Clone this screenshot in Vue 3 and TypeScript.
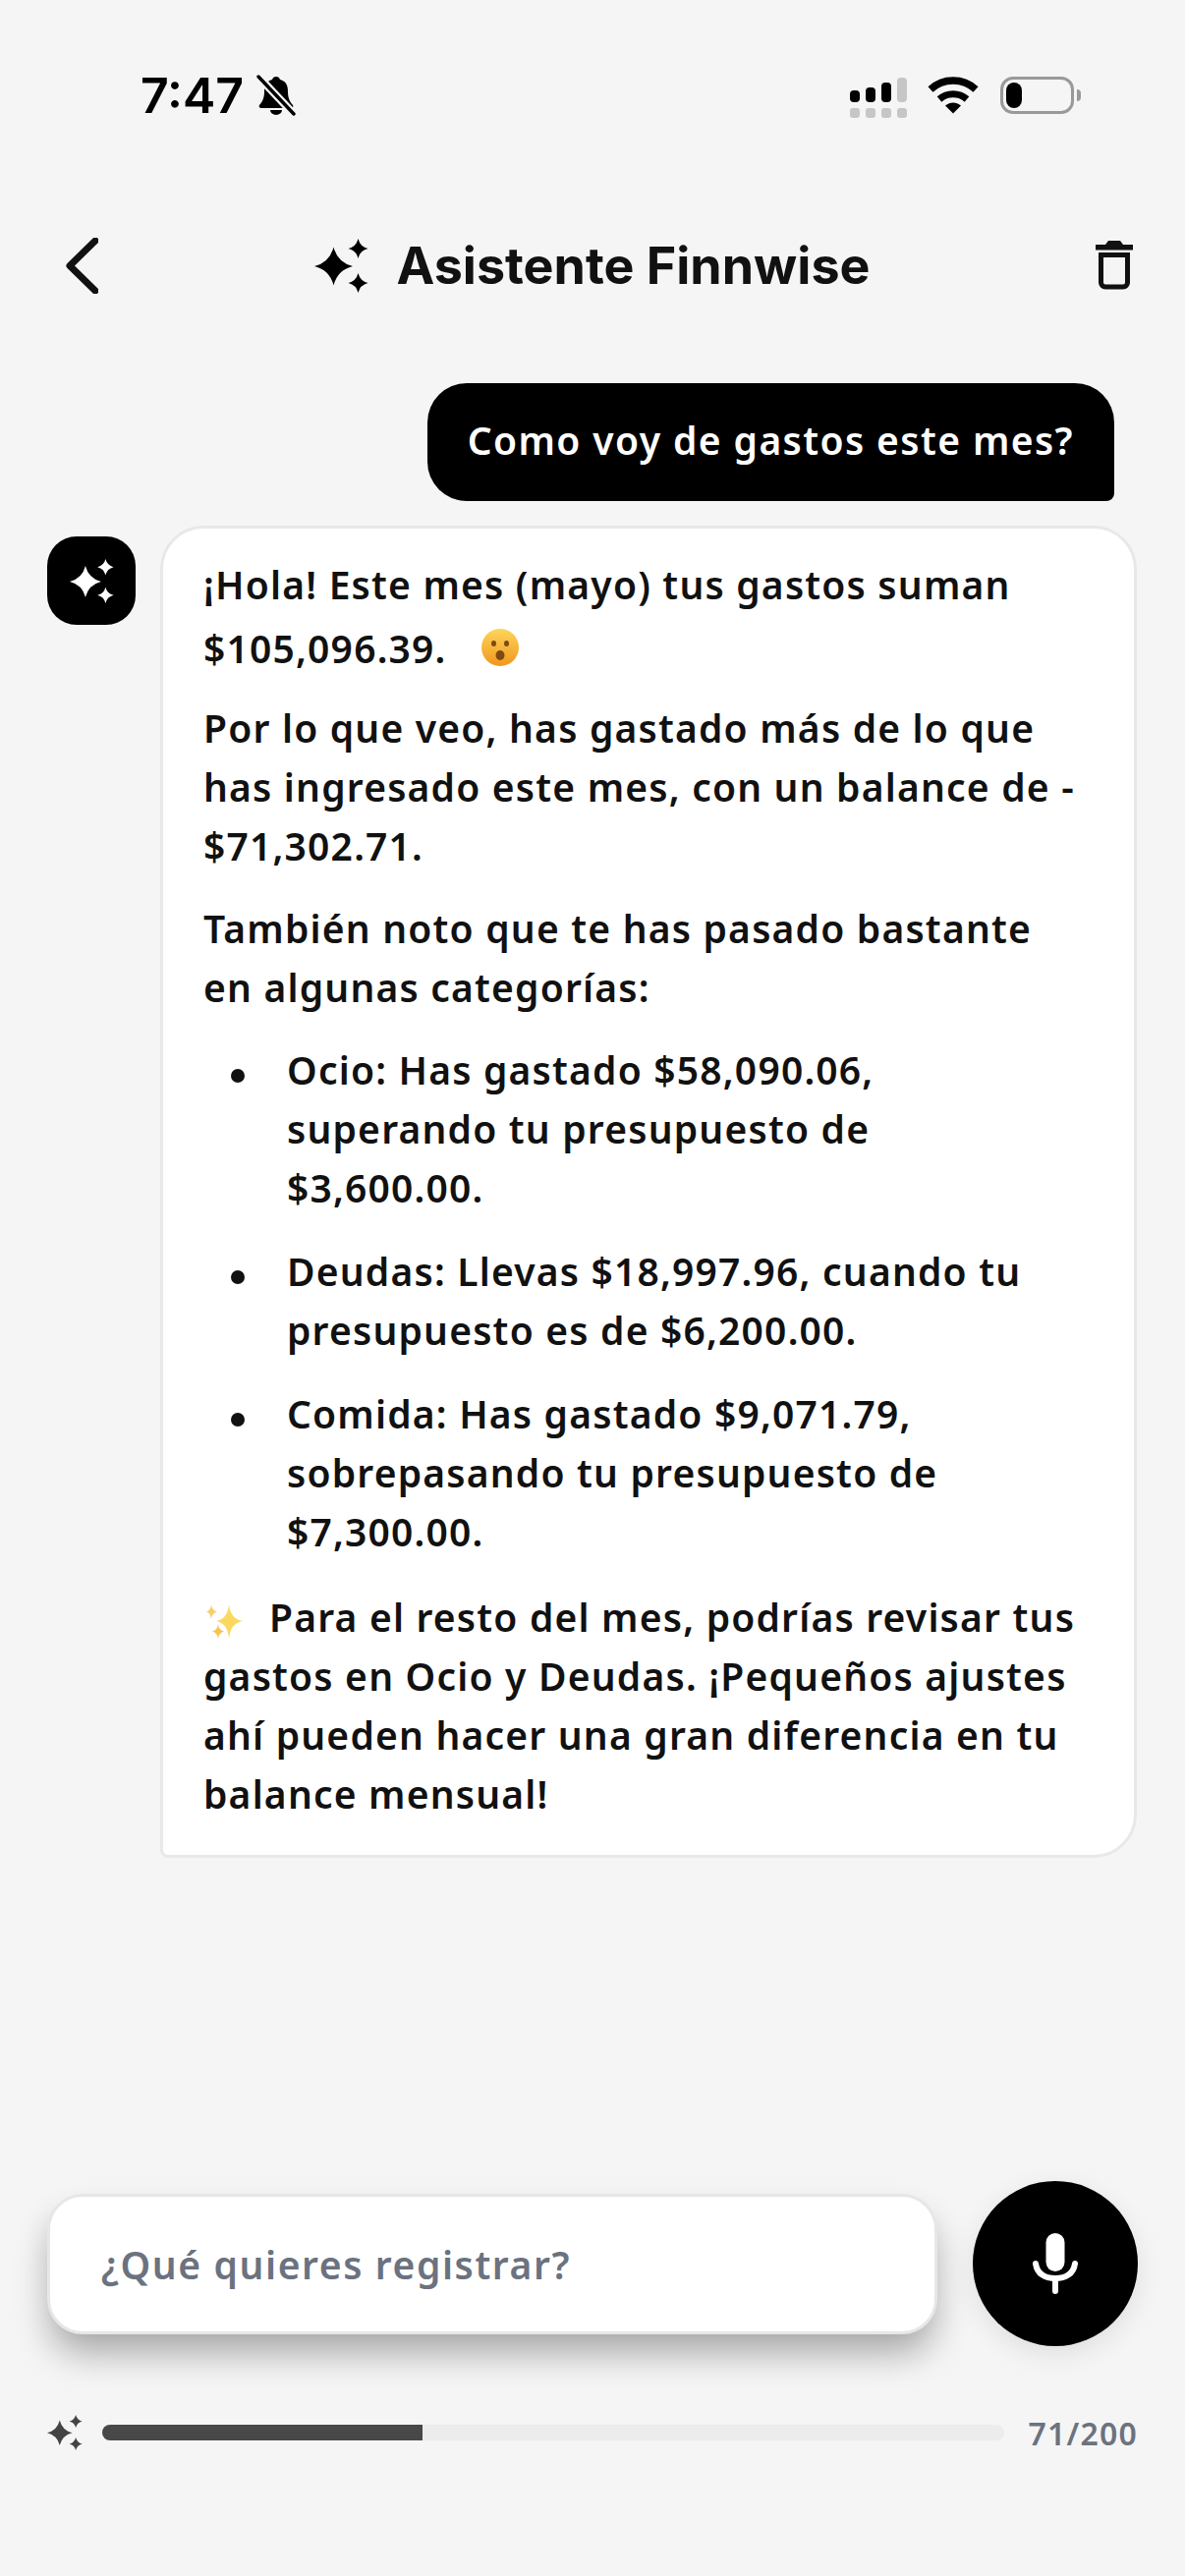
<script setup lang="ts">
interface Budget { lines: string[] }

function star(cx: number, cy: number, r: number): string {
  const k = r * 0.2
  return `M${cx} ${cy - r}Q${cx + k} ${cy - k} ${cx + r} ${cy}Q${cx + k} ${cy + k} ${cx} ${cy + r}Q${cx - k} ${cy + k} ${cx - r} ${cy}Q${cx - k} ${cy - k} ${cx} ${cy - r}Z`
}

const sparkles = star(19.5, 28, 19.5) + star(44.5, 10, 10) + star(44.5, 45, 10)
const usagePct = 35.5

const budgets: Budget[] = [
  { lines: ['Ocio: Has gastado $58,090.06,', 'superando tu presupuesto de', '$3,600.00.'] },
  { lines: ['Deudas: Llevas $18,997.96, cuando tu', 'presupuesto es de $6,200.00.'] },
  { lines: ['Comida: Has gastado $9,071.79,', 'sobrepasando tu presupuesto de', '$7,300.00.'] },
]

const signal = [
  { h: 12, on: true },
  { h: 15, on: true },
  { h: 20, on: true },
  { h: 25, on: false },
]
</script>

<template>
  <div class="screen">
    <div class="status">
      <div class="status-left">
        <span class="time">7:47</span>
        <svg class="bell" viewBox="0 0 40 42" width="40" height="42">
          <path d="M20 2c-2 0-3.400 1.300-4 3C10 6.500 8 11 8 17c0 6-1.500 10-5 14-1 1.500 0 3 2 3h30c2 0 3-1.500 2-3-3.500-4-5-8-5-14 0-6-2-10.500-8-12-.6-1.700-2-3-4-3z" fill="#000"/>
          <path d="M14 36a6 5 0 0 0 12 0z" fill="#000"/>
          <path d="M3 3l34 36" stroke="#f5f5f5" stroke-width="8"/>
          <path d="M2 2l36 38" stroke="#000" stroke-width="3.400" stroke-linecap="round"/>
        </svg>
      </div>
      <div class="status-right">
        <div class="signal">
          <div v-for="(b, i) in signal" :key="i" class="sig-col">
            <span class="sig-bar" :class="{ off: !b.on }" :style="{ height: b.h + 'px' }"></span>
            <span class="sig-dot"></span>
          </div>
        </div>
        <svg class="wifi" viewBox="0 0 52 38" width="52" height="38">
          <path d="M3 13C16 1 36 1 49 13" fill="none" stroke="#000" stroke-width="7.500"/>
          <path d="M12 23c8-7 20-7 28 0" fill="none" stroke="#000" stroke-width="7"/>
          <path d="M18 29.500c5-4 11-4 16 0L26 37.500z" fill="#000"/>
        </svg>
        <div class="battery">
          <span class="cell"></span>
        </div>
        <span class="nub"></span>
      </div>
    </div>

    <header class="head">
      <svg class="back" viewBox="0 0 33 57" width="33" height="57">
        <path d="M30 3L4 28.500 30 54" fill="none" stroke="#111" stroke-width="7" stroke-linecap="round" stroke-linejoin="round"/>
      </svg>
      <div class="title">
        <svg viewBox="0 0 55 55" width="55" height="55"><path :d="sparkles" fill="#000"/></svg>
        <h1>Asistente Finnwise</h1>
      </div>
      <svg class="trash" viewBox="0 0 38 50" width="38" height="50">
        <path d="M10 4l3-4h12l3 4h10v5.500H0V4z" fill="#111"/>
        <path d="M5.500 14.500v28a4.500 4.500 0 0 0 4.500 4.500h18a4.500 4.500 0 0 0 4.500-4.500v-28z" fill="none" stroke="#111" stroke-width="5"/>
      </svg>
    </header>

    <main class="thread">
      <div class="user-msg">Como voy de gastos este mes?</div>

      <div class="bot-row">
        <div class="avatar">
          <svg viewBox="0 0 55 55" width="45" height="45"><path :d="sparkles" fill="#fff"/></svg>
        </div>
        <div class="bot-msg">
          <p class="first">¡Hola! Este mes (mayo) tus gastos suman<br>$105,096.39.
            <svg class="emoji" viewBox="0 0 38 38" width="38" height="38">
              <defs>
                <linearGradient id="face" x1="0" y1="0" x2="0" y2="1">
                  <stop offset="0" stop-color="#fcd65a"/>
                  <stop offset="1" stop-color="#f0971e"/>
                </linearGradient>
              </defs>
              <circle cx="19" cy="19" r="19" fill="url(#face)"/>
              <ellipse cx="12.500" cy="15" rx="2.500" ry="3" fill="#7c4a12"/>
              <ellipse cx="25.500" cy="15" rx="2.500" ry="3" fill="#7c4a12"/>
              <ellipse cx="19" cy="27" rx="4.500" ry="5" fill="#7c4a12"/>
            </svg>
          </p>
          <p>Por lo que veo, has gastado más de lo que<br>has ingresado este mes, con un balance de -<br>$71,302.71.</p>
          <p>También noto que te has pasado bastante<br>en algunas categorías:</p>
          <ul>
            <li v-for="b in budgets" :key="b.lines[0]">
              <template v-for="(l, i) in b.lines" :key="i">{{ l }}<br v-if="i < b.lines.length - 1"></template>
            </li>
          </ul>
          <p>
            <svg class="emoji spark" viewBox="0 0 38 36" width="38" height="36">
              <path d="M23 0Q24.500 15 37 17 24.500 19 23 35 21.500 19 10 17 21.500 15 23 0Z" fill="#fbd85e"/>
              <path d="M5 0Q5.500 6 11 7.500 5.500 9 5 15 4.500 9 0 7.500 4.500 6 5 0Z" fill="#f9cf6b"/>
              <path d="M12 20Q12.500 26 18 27.500 12.500 29 12 35 11.500 29 6 27.500 11.500 26 12 20Z" fill="#f8c44f"/>
            </svg>Para el resto del mes, podrías revisar tus<br>gastos en Ocio y Deudas. ¡Pequeños ajustes<br>ahí pueden hacer una gran diferencia en tu<br>balance mensual!</p>
        </div>
      </div>
    </main>

    <footer class="composer">
      <div class="input-row">
        <div class="input">¿Qué quieres registrar?</div>
        <button class="mic" type="button">
          <svg viewBox="0 0 46 62" width="46" height="62">
            <rect x="13.500" y="0" width="19" height="39" rx="9.500" fill="#fff"/>
            <path d="M3 31c1.500 11 10 15 20 15s18.500-4 20-15" fill="none" stroke="#fff" stroke-width="6" stroke-linecap="round"/>
            <path d="M23 46v13" stroke="#fff" stroke-width="6" stroke-linecap="round"/>
          </svg>
        </button>
      </div>
      <div class="usage">
        <svg viewBox="0 0 55 55" width="36" height="36"><path :d="sparkles" fill="#444"/></svg>
        <div class="track"><div class="fill" :style="{ width: usagePct + '%' }"></div></div>
        <span class="count">71/200</span>
      </div>
    </footer>
  </div>
</template>

<style>
html, body { margin: 0; background: #f5f5f5; }
</style>

<style scoped>
.screen {
  width: 1206px;
  height: 2622px;
  background: #f5f5f5;
  color: #111;
  display: flex;
  flex-direction: column;
  font-family: "Noto Sans", "Lato", sans-serif;
  overflow: hidden;
}
.status {
  height: 42px;
  margin-top: 76px;
  padding: 0 106px 0 143px;
  display: flex;
  justify-content: space-between;
  align-items: center;
}
.status-left { display: flex; align-items: center; gap: 13px; }
.time {
  font-family: "Inter", sans-serif;
  font-weight: 600;
  font-size: 50px;
  color: #000;
  line-height: 42px;
}
.status-right { display: flex; align-items: center; }
.signal { display: flex; gap: 6px; margin-right: 21px; }
.sig-col { display: flex; flex-direction: column; justify-content: flex-end; gap: 6px; height: 46px; width: 10px; }
.sig-bar { background: #000; border-radius: 4px; }
.sig-bar.off { background: #c6c6c6; }
.sig-dot { height: 10px; background: #c6c6c6; border-radius: 3px; }
.wifi { margin-right: 22px; }
.battery {
  width: 75px;
  height: 38px;
  box-sizing: border-box;
  border: 3px solid #999;
  border-radius: 13px;
  padding: 3px;
}
.cell { display: block; width: 16px; height: 100%; background: #000; border-radius: 8px; }
.nub {
  width: 4px;
  height: 12px;
  margin-left: 3px;
  background: #999;
  border-radius: 0 4px 4px 0;
}
.head {
  height: 120px;
  margin-top: 92px;
  padding: 0 53px;
  display: grid;
  grid-template-columns: 1fr auto 1fr;
  align-items: center;
}
.back { margin-left: 14px; }
.title { display: flex; align-items: center; gap: 28px; }
.title h1 {
  margin: 0;
  font-family: "Inter", sans-serif;
  font-weight: 700;
  font-size: 52px;
  color: #111;
}
.trash { justify-self: end; }
.thread {
  flex: 1;
  padding: 60px 49px 0 48px;
  display: flex;
  flex-direction: column;
  gap: 25px;
}
.user-msg {
  align-self: flex-end;
  margin-right: 23px;
  background: #000;
  color: #fff;
  font-size: 39px;
  font-weight: 600;
  letter-spacing: 1.4px;
  line-height: 116px;
  height: 120px;
  padding: 0 41px 0 41px;
  border-radius: 40px 40px 8px 40px;
}
.bot-row { display: flex; gap: 25px; align-items: flex-start; }
.avatar {
  flex: none;
  width: 90px;
  height: 90px;
  margin-top: 11px;
  background: #000;
  border-radius: 30px;
  display: flex;
  align-items: center;
  justify-content: center;
}
.bot-msg {
  flex: 1;
  box-sizing: border-box;
  background: #fff;
  border: 3px solid #e8e8ec;
  border-radius: 44px 44px 44px 8px;
  padding: 24px 30px 32px 41px;
  font-size: 39px;
  font-weight: 600;
  letter-spacing: 1.2px;
  line-height: 60px;
  color: #111;
}
.bot-msg p { margin: 0 0 24px; white-space: nowrap; }
.bot-msg p:last-child { margin-bottom: 0; }
.bot-msg .first { line-height: 65px; margin-bottom: 19px; }
.emoji { vertical-align: -3px; margin-left: 24px; }
.emoji.spark { vertical-align: -8px; margin: 0 26px 0 3px; }
.bot-msg ul { list-style: none; margin: 0 0 27px; padding: 0; }
.bot-msg li {
  position: relative;
  padding-left: 85px;
  margin-bottom: 25px;
  white-space: nowrap;
}
.bot-msg li:last-child { margin-bottom: 0; }
.bot-msg li::before {
  content: "";
  position: absolute;
  left: 28px;
  top: 29px;
  width: 14px;
  height: 14px;
  border-radius: 50%;
  background: #111;
}
.composer { padding: 0 48px 132px; display: flex; flex-direction: column; gap: 74px; }
.input-row { display: flex; align-items: center; gap: 36px; }
.input {
  flex: 1;
  height: 143px;
  box-sizing: border-box;
  background: #fff;
  border: 3px solid #e6e7ea;
  border-radius: 36px;
  padding-left: 52px;
  display: flex;
  align-items: center;
  font-size: 39px;
  font-weight: 600;
  letter-spacing: 1.6px;
  color: #6b7280;
  box-shadow: 0 22px 36px -4px rgba(0, 0, 0, 0.33);
}
.mic {
  flex: none;
  width: 168px;
  height: 168px;
  border: none;
  padding: 0;
  border-radius: 50%;
  background: #000;
  display: flex;
  align-items: center;
  justify-content: center;
  box-shadow: 0 8px 28px rgba(0, 0, 0, 0.09);
}
.usage { display: flex; align-items: center; height: 28px; }
.track {
  flex: 1;
  height: 16px;
  margin: 0 25px 0 20px;
  border-radius: 8px;
  background: #ececec;
  overflow: hidden;
}
.fill { height: 100%; background: #484848; }
.count {
  font-size: 32px;
  font-weight: 600;
  letter-spacing: 1.2px;
  color: #6b7280;
}
</style>
